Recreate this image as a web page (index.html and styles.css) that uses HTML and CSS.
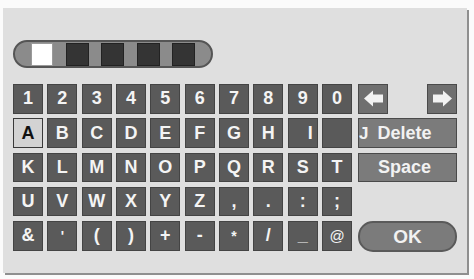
FILE: index.html
```html
<!DOCTYPE html>
<html>
<head>
<meta charset="utf-8">
<link rel="stylesheet" href="styles.css">
</head>
<body>
<div class="panel">
  <div class="progress">
    <span class="cell cell-on"></span>
    <span class="cell"></span>
    <span class="cell"></span>
    <span class="cell"></span>
    <span class="cell"></span>
  </div>
  <div class="board">
    <div class="keys">
      <div class="key">1</div><div class="key">2</div><div class="key">3</div><div class="key">4</div><div class="key">5</div>
      <div class="key">6</div><div class="key">7</div><div class="key">8</div><div class="key">9</div><div class="key">0</div>
      <div class="key key-sel">A</div><div class="key">B</div><div class="key">C</div><div class="key">D</div><div class="key">E</div>
      <div class="key">F</div><div class="key">G</div><div class="key">H</div><div class="key key-shift">I</div><div class="key"></div>
      <div class="key">K</div><div class="key">L</div><div class="key">M</div><div class="key">N</div><div class="key">O</div>
      <div class="key">P</div><div class="key">Q</div><div class="key">R</div><div class="key">S</div><div class="key">T</div>
      <div class="key">U</div><div class="key">V</div><div class="key">W</div><div class="key">X</div><div class="key">Y</div>
      <div class="key">Z</div><div class="key">,</div><div class="key">.</div><div class="key">:</div><div class="key">;</div>
      <div class="key">&amp;</div><div class="key key-sm">'</div><div class="key">(</div><div class="key">)</div><div class="key">+</div>
      <div class="key">-</div><div class="key key-sm">*</div><div class="key">/</div><div class="key">_</div><div class="key key-at">@</div>
    </div>
    <div class="side">
      <div class="arrows">
        <div class="btn arrow">
          <svg width="21" height="17" viewBox="0 0 21 17"><path d="M1 8.5 L10 0.5 L10 4.5 L20 4.5 L20 12.5 L10 12.5 L10 16.5 Z" fill="#f2f2f2"/></svg>
        </div>
        <div class="btn arrow">
          <svg width="21" height="17" viewBox="0 0 21 17"><path d="M20 8.5 L11 0.5 L11 4.5 L1 4.5 L1 12.5 L11 12.5 L11 16.5 Z" fill="#f2f2f2"/></svg>
        </div>
      </div>
      <div class="btn wide"><span class="stray">J</span>Delete</div>
      <div class="btn wide">Space</div>
      <div class="blank"></div>
      <div class="btn ok">OK</div>
    </div>
  </div>
</div>
</body>
</html>
```

FILE: styles.css
```css
html, body {
  margin: 0;
  padding: 0;
  background: #fbfbfb;
  width: 474px;
  height: 279px;
  overflow: hidden;
  font-family: "Liberation Sans", Arial, sans-serif;
}

.panel {
  margin: 8px 0 0 3px;
  width: 464px;
  height: 265px;
  box-sizing: border-box;
  padding: 32px 0 0 10px;
  background: #dfdfdf;
  box-shadow: 2px 2px 0 #8f8f8f;
}

.progress {
  width: 200px;
  height: 28px;
  box-sizing: border-box;
  border: 2px solid #555;
  border-radius: 14px;
  background: #8b8b8b;
  display: flex;
  align-items: center;
  gap: 12.5px;
  padding-left: 16px;
}

.cell {
  width: 23px;
  height: 23px;
  box-sizing: border-box;
  background: #343434;
  border: 1px solid #222;
}

.cell-on {
  width: 22px;
  background: #ffffff;
  border-color: #9a9a9a;
}

.board {
  margin-top: 16px;
  display: flex;
  gap: 6px;
}

.keys {
  width: 339px;
  display: grid;
  grid-template-columns: repeat(10, 1fr);
  grid-template-rows: repeat(5, 29.6px);
  column-gap: 4.33px;
  row-gap: 4.7px;
}

.key {
  box-sizing: border-box;
  background: #5a5a5a;
  border: 1px solid #444;
  color: #f4f4f4;
  font-weight: bold;
  font-size: 18px;
  display: flex;
  align-items: center;
  justify-content: center;
}

.key-sel {
  background: #d3d3d3;
  border-color: #3a3a3a;
  color: #111;
}

.key-shift {
  justify-content: flex-end;
  padding-right: 4px;
}

.key-sm {
  font-size: 14px;
  align-items: flex-start;
  padding-top: 6px;
}

.key-at {
  font-size: 15px;
  font-weight: normal;
}

.side {
  width: 99px;
  display: grid;
  grid-template-rows: repeat(5, 29.6px);
  row-gap: 4.7px;
}

.arrows {
  display: flex;
  justify-content: space-between;
}

.btn {
  box-sizing: border-box;
  background: #7b7b7b;
  border: 1px solid #4a4a4a;
  color: #f2f2f2;
  font-weight: bold;
  font-size: 18px;
  display: flex;
  align-items: center;
  justify-content: center;
}

.arrow {
  width: 30px;
  background: #6f6f6f;
}

.wide {
  position: relative;
  padding-right: 6px;
}

.stray {
  position: absolute;
  left: 0;
  top: 5px;
  font-size: 17px;
}

.ok {
  border: 2px solid #5a5a5a;
  border-radius: 15px;
  height: 31px;
  font-size: 19px;
}
```
